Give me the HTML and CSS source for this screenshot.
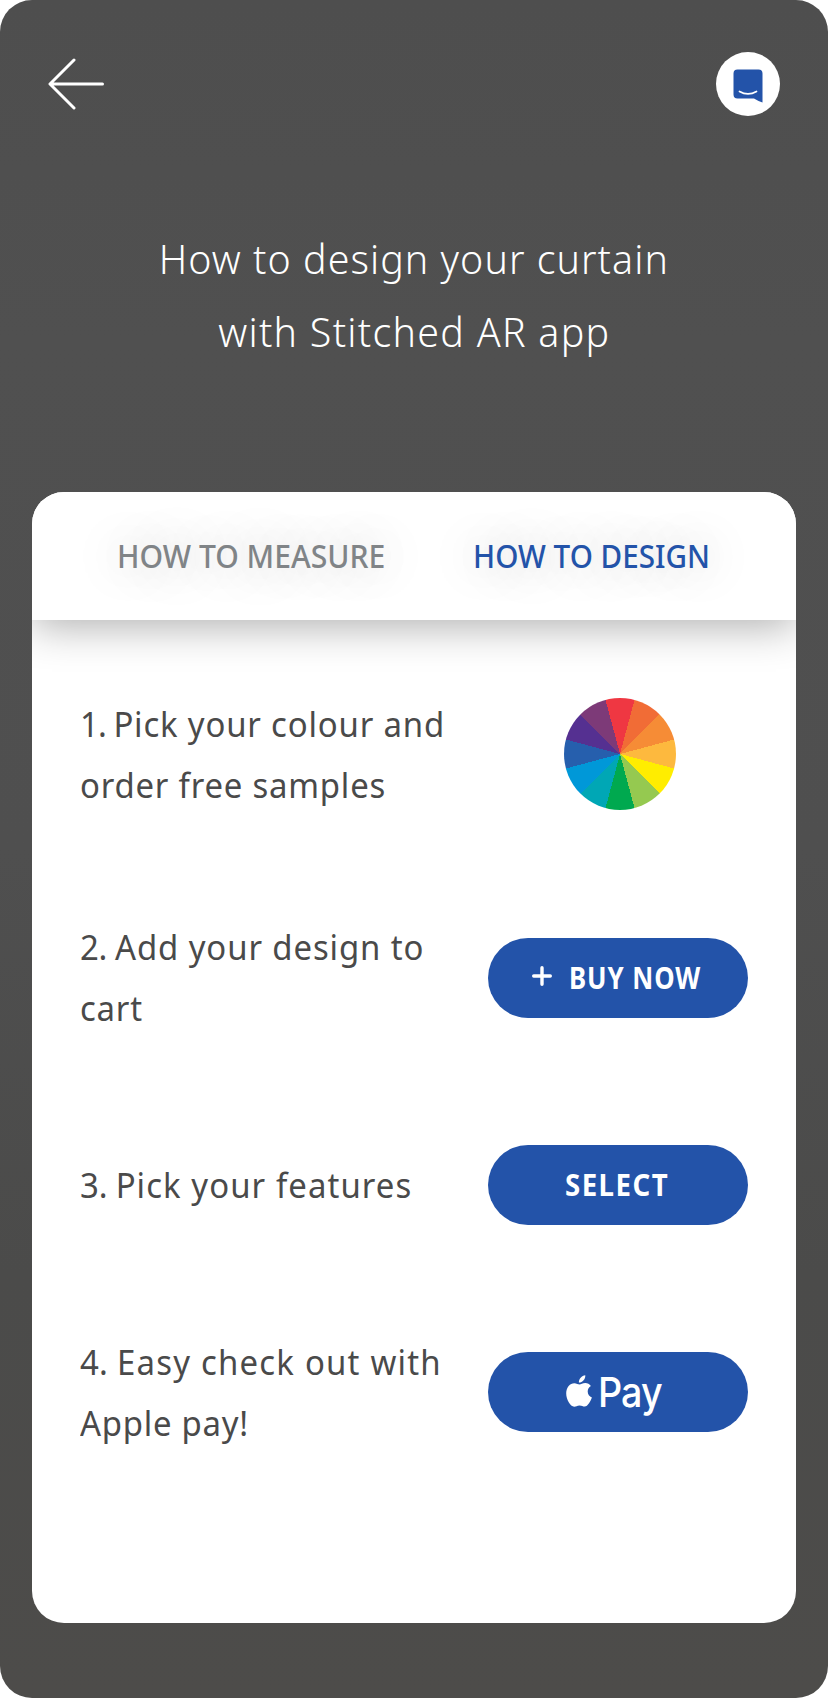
FILE: index.html
```html
<!DOCTYPE html>
<html lang="en">
<head>
<meta charset="utf-8">
<title>How to design your curtain</title>
<link rel="stylesheet" href="styles.css">
</head>
<body>
<main class="screen">
  <header class="topbar">
    <svg class="back" width="60" height="56" viewBox="0 0 60 56" fill="none" stroke="#fff" stroke-width="3" stroke-linecap="round" stroke-linejoin="round"><path d="M26 4L2 28L26 52M2.500 28H54.500"/></svg>
    <span class="chat"><svg width="64" height="64" viewBox="0 0 64 64"><path fill="#2353a9" d="M21.500 17.500H42.500Q46.500 17.500 46.500 21.500V50.500Q41 48.500 38 46.500H21.500Q17.500 46.500 17.500 42.500V21.500Q17.500 17.500 21.500 17.500Z"/><path d="M23.500 39.500Q32 44.300 40.500 39.500" fill="none" stroke="#fff" stroke-width="1.700" stroke-linecap="round"/></svg></span>
  </header>
  <h1 class="title"><span class="line t1">How to design your curtain</span><span class="line t2">with Stitched AR app</span></h1>
  <section class="card">
    <nav class="tabs"><span class="tab tab-measure">HOW TO MEASURE</span><span class="tab tab-design">HOW TO DESIGN</span></nav>
    <div class="steps">
      <div class="step">
        <p class="text"><span class="line s1"><span class="num n1">1. </span>Pick your colour and</span><span class="line s2">order free samples</span></p>
        <span class="wheel"></span>
      </div>
      <div class="step">
        <p class="text raised"><span class="line s3"><span class="num n2">2. </span>Add your design to</span><span class="line s4">cart</span></p>
        <span class="button"><svg class="plus" width="20" height="20" viewBox="0 0 20 20" stroke="#fff" stroke-width="3.400" stroke-linecap="round"><path d="M10 1.700V18.300M1.700 10H18.300"/></svg><span class="buy">BUY NOW</span></span>
      </div>
      <div class="step">
        <p class="text raised"><span class="line s5"><span class="num n3">3. </span>Pick your features</span></p>
        <span class="button"><span class="select">SELECT</span></span>
      </div>
      <div class="step">
        <p class="text"><span class="line s6"><span class="num n4">4. </span>Easy check out with</span><span class="line s7">Apple pay!</span></p>
        <span class="button pay"><svg class="apple" width="26" height="32" viewBox="0 0 26 32" fill="#fff"><path d="M19.300.200C19.600 3.900 16.500 7.600 12.900 7.600C12.500 4.100 15.900.500 19.300.200Z"/><path d="M24.900 10.900C22.900 12.200 21.700 14 21.700 16.500C21.700 19.300 23.400 21.500 25.900 22.500C24.900 25.800 21.700 31.600 18.700 31.600C16.700 31.600 15.900 30.400 13.500 30.400C11 30.400 10.100 31.700 8.200 31.700C4.300 31.700.200 24.700.200 18.300C.200 12.100 4.100 8.200 8.300 8.200C10.500 8.200 12.100 9.500 13.500 9.500C14.800 9.500 16.700 8 19.300 8C21.500 8 23.600 9 24.900 10.900Z"/></svg><span class="paytext">Pay</span></span>
      </div>
    </div>
  </section>
</main>
</body>
</html>
```
FILE: styles.css
```css
* { box-sizing: border-box; }
body { margin: 0; background: #fff; font-family: "Noto Sans", sans-serif; }
.screen {
  width: 828px;
  height: 1698px;
  padding: 52px 32px 75px;
  border-radius: 32px;
  background: linear-gradient(#4e4e4e, #505050 20%, #4f4f4f 50%, #4b4b4a 75%, #4d4c4a);
  display: flex;
  flex-direction: column;
}
.topbar { display: flex; justify-content: space-between; align-items: center; height: 64px; padding: 0 16px; }
.back, .chat svg, .plus, .apple { display: block; flex: none; }
.chat { width: 64px; height: 64px; border-radius: 50%; background: #fff; }
.line { display: block; width: max-content; white-space: nowrap; }
.title {
  margin: 106px 0 0;
  height: 270px;
  color: #fff;
  font-weight: 300;
  font-size: 41px;
  line-height: 73px;
}
.title .line { margin: 0 auto; transform: scaleX(.96); }
.t1 { letter-spacing: 1.1px; }
.t2 { letter-spacing: 1.35px; }
.card { flex: 1; border-radius: 32px; background: #fff; overflow: hidden; }
.tabs {
  height: 128px;
  padding-left: 85px;
  display: grid;
  grid-template-columns: 356px 1fr;
  align-items: center;
  background: #fff;
  box-shadow: 0 6px 40px rgba(0, 0, 0, .32);
  font-size: 32px;
  font-weight: 500;
  line-height: 40px;
  text-shadow: 0 0 50px rgba(0, 0, 0, .32);
}
.tab { white-space: nowrap; width: max-content; transform: scaleX(.94); transform-origin: 0 50%; }
.tab-measure { color: #808487; }
.tab-design { color: #2353a9; transform: scaleX(.925); }
.steps { padding: 73px 48px 0; }
.step { height: 122px; margin-bottom: 85px; display: flex; justify-content: space-between; align-items: center; }
.step:first-child { margin-bottom: 102px; }
.text { margin: 0; width: 390px; font-size: 35px; line-height: 61px; color: #4a4a4a; }
.raised { padding-bottom: 2px; }
.text .line { height: 61px; transform: scaleX(.94); transform-origin: 0 50%; }
.s1 { letter-spacing: .88px; }
.s2, .s4 { letter-spacing: .85px; }
.s3 { letter-spacing: .95px; }
.s5 { letter-spacing: 1.15px; }
.s6 { letter-spacing: 1.3px; }
.s7 { letter-spacing: .8px; }
.n1 { letter-spacing: -1px; }
.n2 { letter-spacing: -.4px; }
.n3 { letter-spacing: -.2px; }
.n4 { letter-spacing: .3px; }
.wheel {
  width: 112px;
  height: 112px;
  margin-right: 72px;
  border-radius: 50%;
  background: conic-gradient(from -15deg, #ef3742 0 30deg, #f16c36 0 60deg, #f68c36 0 90deg, #fdb93e 0 120deg, #ffed00 0 150deg, #95c950 0 180deg, #00a94f 0 210deg, #00a7b5 0 240deg, #0098d8 0 270deg, #265fad 0 300deg, #553091 0 330deg, #7d3a78 0);
}
.button {
  width: 260px;
  height: 80px;
  border-radius: 40px;
  background: #2353a9;
  color: #fff;
  display: flex;
  align-items: center;
  padding-left: 44px;
  font-weight: 700;
  font-size: 30px;
  line-height: 40px;
}
.buy, .select { white-space: nowrap; transform: scaleX(.86); transform-origin: 0 50%; letter-spacing: 1.1px; }
.select { margin-left: 33px; transform: scaleX(.92); letter-spacing: 1.6px; }
.plus { margin: 0 17px 4px 0; }
.pay { padding-left: 78px; }
.apple { margin-bottom: 2px; }
.paytext { margin-left: 6px; font-family: Inter, sans-serif; font-weight: 500; font-size: 41px; letter-spacing: -1px; transform: scaleX(.92); transform-origin: 0 50%; }
```
